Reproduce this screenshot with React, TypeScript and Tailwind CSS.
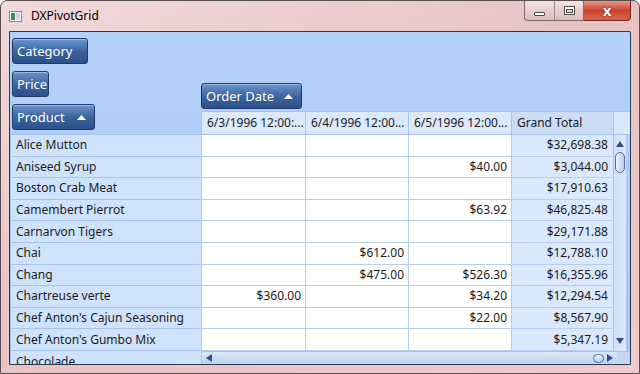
import React from 'react';

interface Row {
    name: string;
    cells: string[];
    total: string;
}

const rows: Row[] = [
    { name: 'Alice Mutton', cells: ['', '', ''], total: '$32,698.38' },
    { name: 'Aniseed Syrup', cells: ['', '', '$40.00'], total: '$3,044.00' },
    { name: 'Boston Crab Meat', cells: ['', '', ''], total: '$17,910.63' },
    { name: 'Camembert Pierrot', cells: ['', '', '$63.92'], total: '$46,825.48' },
    { name: 'Carnarvon Tigers', cells: ['', '', ''], total: '$29,171.88' },
    { name: 'Chai', cells: ['', '$612.00', ''], total: '$12,788.10' },
    { name: 'Chang', cells: ['', '$475.00', '$526.30'], total: '$16,355.96' },
    { name: 'Chartreuse verte', cells: ['$360.00', '', '$34.20'], total: '$12,294.54' },
    { name: "Chef Anton's Cajun Seasoning", cells: ['', '', '$22.00'], total: '$8,567.90' },
    { name: "Chef Anton's Gumbo Mix", cells: ['', '', ''], total: '$5,347.19' },
];

const colWidths = ['w-[104px]', 'w-[103px]', 'w-[103px]'];
const headers = ['6/3/1996 12:00:...', '6/4/1996 12:00...', '6/5/1996 12:00...'];

function FieldButton({ label, width, sort = false }: { label: string; width: string; sort?: boolean }) {
    return (
        <div
            className={`${width} h-[26px] flex items-center justify-between pl-[4px] pr-[8px] rounded-[3px] border border-[#1f3b6a] bg-gradient-to-b from-[#6a96d0] via-[#3f659d] to-[#2b4f8a] text-white text-[13px] shadow-[inset_0_1px_0_rgba(255,255,255,0.35)]`}
        >
            <span className="leading-none">{label}</span>
            {sort && (
                <svg width="9" height="5" viewBox="0 0 9 5">
                    <path d="M0 5 L4.5 0 L9 5 Z" fill="#ffffff" />
                </svg>
            )}
        </div>
    );
}

function Arrow({ dir }: { dir: 'up' | 'down' | 'left' | 'right' }) {
    const d = {
        up: 'M0 6 L4 0 L8 6 Z',
        down: 'M0 0 L8 0 L4 6 Z',
        left: 'M6 0 L6 8 L0 4 Z',
        right: 'M0 0 L6 4 L0 8 Z',
    }[dir];
    const vertical = dir === 'up' || dir === 'down';
    return (
        <svg width={vertical ? 8 : 6} height={vertical ? 6 : 8} viewBox={vertical ? '0 0 8 6' : '0 0 6 8'}>
            <path d={d} fill="#2e4f8c" />
        </svg>
    );
}

export default function App() {
    return (
        <div
            className="w-[640px] h-[374px] overflow-hidden bg-[#ffffff] text-[12px] text-[#1b1b1b]"
            style={{ fontFamily: '"Segoe UI", "Noto Sans", sans-serif' }}
        >
            <div className="w-full h-full rounded-t-[7px] border border-[#585050] bg-gradient-to-br from-[#f1dada] via-[#e7c3c2] to-[#eecccc] flex flex-col">
                {/* title bar */}
                <div className="h-[30px] flex items-start justify-between shrink-0">
                    <div className="flex items-center gap-[9px] pl-[8px] pt-[9px]">
                        <div className="w-[13px] h-[11px] border border-[#7a8a9a] bg-[#f4f8fc] flex gap-px p-px">
                            <div className="w-[4px] h-full bg-[#3c8a5a]" />
                            <div className="flex-1 bg-[#c9d9ea]" />
                        </div>
                        <span className="text-[12px] text-black leading-none">DXPivotGrid</span>
                    </div>
                    <div className="flex mr-[8px]">
                        <div className="flex h-[20px] rounded-bl-[4px] border border-t-0 border-[#7d6a6a] bg-gradient-to-b from-[#f4e3e3] to-[#dcbcbc] overflow-hidden">
                            <div className="w-[30px] flex items-center justify-center border-r border-[#9a8585]">
                                <div className="w-[11px] h-[4px] mt-[6px] rounded-[1px] bg-white border border-[#4a4a4a]" />
                            </div>
                            <div className="w-[28px] flex items-center justify-center">
                                <div className="w-[11px] h-[9px] bg-white border border-[#4a4a4a] flex items-center justify-center">
                                    <div className="w-[7px] h-[4px] mt-[1px] bg-[#e9d6d6] border border-[#4a4a4a]" />
                                </div>
                            </div>
                        </div>
                        <div className="w-[47px] h-[20px] rounded-br-[4px] border border-t-0 border-l-0 border-[#6e2a20] bg-gradient-to-b from-[#e89a8a] via-[#c9412b] to-[#d8654c] flex items-center justify-center">
                            <span className="text-white font-bold text-[15px] leading-none [text-shadow:0_0_1px_#3a1a10,0_0_1px_#3a1a10]">x</span>
                        </div>
                    </div>
                </div>

                {/* client area */}
                <div className="mx-[8px] h-[334px] border border-[#2a3a52] rounded-tr-[2px] bg-gradient-to-b from-[#b3d1fa] to-[#a6c6f2] flex flex-col overflow-hidden">
                    <div className="flex shrink-0">
                        <div className="w-[191px] pl-[2px] pt-[6px] pb-[4px] flex flex-col gap-[7px]">
                            <FieldButton label="Category" width="w-[76px]" />
                            <FieldButton label="Price" width="w-[37px]" />
                            <FieldButton label="Product" width="w-[83px]" sort />
                        </div>
                        <div className="flex-1 flex flex-col justify-end">
                            <div className="mb-[2px]">
                                <FieldButton label="Order Date" width="w-[101px]" sort />
                            </div>
                            <div className="flex h-[23px] border-t border-[#a6c3ec] bg-[#dce9fb]">
                                {headers.map((h, i) => (
                                    <div key={h} className={`${colWidths[i]} border-l border-[#a6c3ec] pl-[5px] flex items-center whitespace-nowrap`}>
                                        {h}
                                    </div>
                                ))}
                                <div className="w-[102px] border-l border-[#a6c3ec] pl-[5px] flex items-center bg-[#cbdcf4]">Grand Total</div>
                                <div className="w-[13px] border-l border-[#a6c3ec] bg-[#d9e7fa]" />
                            </div>
                        </div>
                    </div>

                    {/* body */}
                    <div className="flex flex-1 min-h-0 border-t border-[#a6c3ec]">
                        <div className="w-[191px] flex flex-col overflow-hidden bg-[#cfe2fb] border-l border-[#a6c3ec]">
                            {rows.map((r) => (
                                <div key={r.name} className="h-[21.6px] shrink-0 border-b border-[#a9c4ea] pl-[5px] flex items-center whitespace-nowrap">
                                    {r.name}
                                </div>
                            ))}
                            <div className="h-[21.6px] shrink-0 pl-[5px] flex items-center">Chocolade</div>
                        </div>
                        <div className="flex-1 flex flex-col">
                            <div className="flex h-[216px] overflow-hidden">
                                <div className="flex flex-col">
                                    {rows.map((r) => (
                                        <div key={r.name} className="h-[21.6px] shrink-0 flex border-b border-[#b8cdef]">
                                            {r.cells.map((c, i) => (
                                                <div key={i} className={`${colWidths[i]} bg-white border-l border-[#b8cdef] pr-[4px] flex items-center justify-end`}>
                                                    {c}
                                                </div>
                                            ))}
                                            <div className="w-[102px] bg-[#dae8fb] border-l border-[#b8cdef] pr-[5px] flex items-center justify-end">
                                                {r.total}
                                            </div>
                                        </div>
                                    ))}
                                </div>
                                <div className="w-[13px] border-l border-[#a6c3ec] bg-gradient-to-r from-[#cfe0f7] to-[#dde9f9] flex flex-col items-center justify-between py-[6px]">
                                    <div className="flex flex-col items-center gap-[5px]">
                                        <Arrow dir="up" />
                                        <div className="w-[10px] h-[21px] rounded-full border border-[#4c6fa6] bg-gradient-to-r from-[#eef4fc] to-[#b5cdee]" />
                                    </div>
                                    <div className="mb-[1px]">
                                        <Arrow dir="down" />
                                    </div>
                                </div>
                            </div>
                            <div className="h-[13px] flex border-t border-[#a6c3ec] bg-gradient-to-b from-[#d8e6f7] to-[#bed3ee]">
                                <div className="flex-1 flex items-center justify-between pl-[4px] pr-[4px] border-l border-[#a6c3ec]">
                                    <Arrow dir="left" />
                                    <div className="flex items-center gap-[3px]">
                                        <div className="w-[11px] h-[9px] rounded-full border border-[#4c6fa6] bg-gradient-to-b from-[#eef4fc] to-[#b5cdee]" />
                                        <Arrow dir="right" />
                                    </div>
                                </div>
                                <div className="w-[13px] bg-[#c7d9f1]" />
                            </div>
                        </div>
                    </div>
                </div>
            </div>
        </div>
    );
}
